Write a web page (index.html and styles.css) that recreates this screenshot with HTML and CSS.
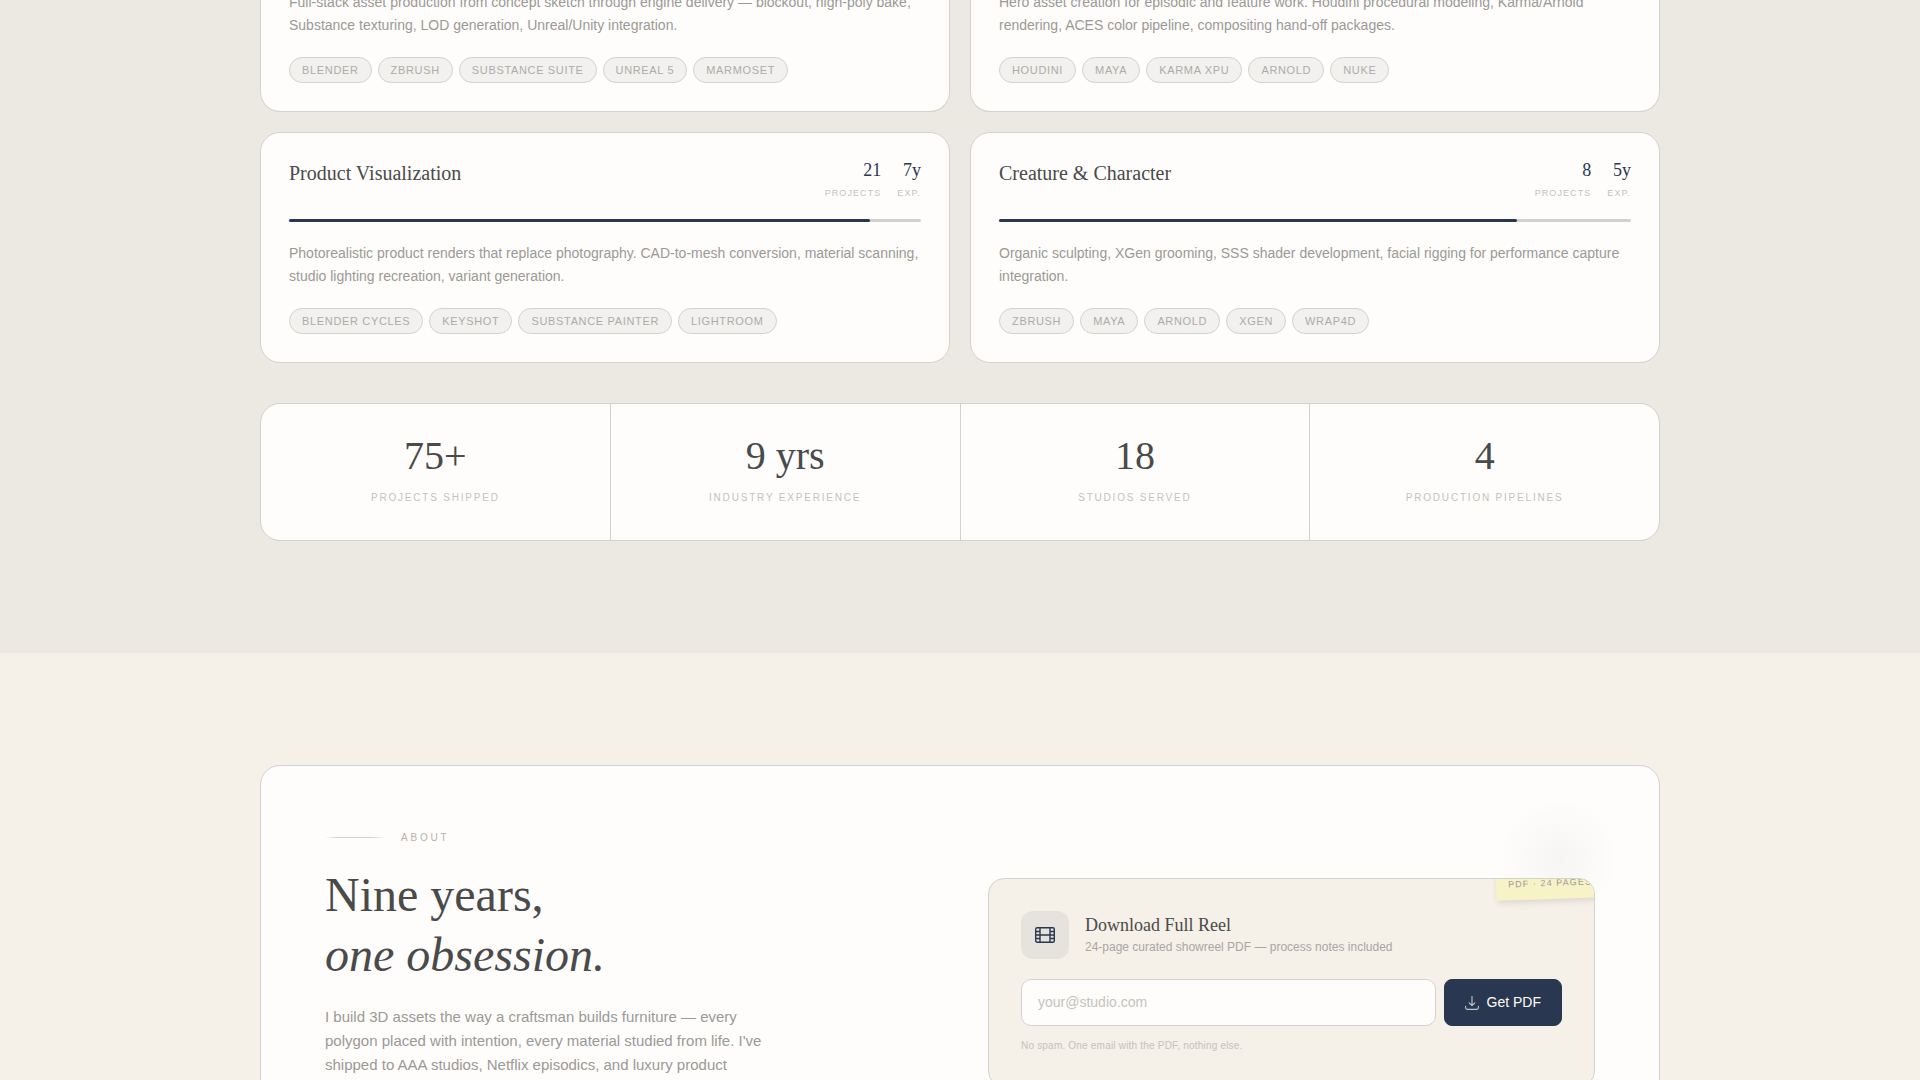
FILE: index.html
```html
<!DOCTYPE html>
<html lang="en">
<head>
    <meta charset="UTF-8">
    <meta name="viewport" content="width=device-width, initial-scale=1.0">
    <title>3D Artist Portfolio</title>
    <link rel="stylesheet" href="styles.css">
</head>
<body>
    <!-- Skills -->
    <section class="skills">
        <div class="container">
            <div class="skills-grid">
                <article class="skill-card skill-card-cut">
                    <p class="skill-desc">Full-stack asset production from concept sketch through engine delivery — blockout, high-poly bake, Substance texturing, LOD generation, Unreal/Unity integration.</p>
                    <ul class="tags">
                        <li>Blender</li>
                        <li>ZBrush</li>
                        <li>Substance Suite</li>
                        <li>Unreal 5</li>
                        <li>Marmoset</li>
                    </ul>
                </article>

                <article class="skill-card skill-card-cut">
                    <p class="skill-desc">Hero asset creation for episodic and feature work. Houdini procedural modeling, Karma/Arnold rendering, ACES color pipeline, compositing hand-off packages.</p>
                    <ul class="tags">
                        <li>Houdini</li>
                        <li>Maya</li>
                        <li>Karma XPU</li>
                        <li>Arnold</li>
                        <li>Nuke</li>
                    </ul>
                </article>

                <article class="skill-card">
                    <div class="skill-header">
                        <h3>Product Visualization</h3>
                        <div class="skill-meta">
                            <div><strong>21</strong><span>Projects</span></div>
                            <div><strong>7y</strong><span>Exp.</span></div>
                        </div>
                    </div>
                    <div class="skill-bar"><div class="skill-fill" style="width: 92%"></div></div>
                    <p class="skill-desc">Photorealistic product renders that replace photography. CAD-to-mesh conversion, material scanning, studio lighting recreation, variant generation.</p>
                    <ul class="tags">
                        <li>Blender Cycles</li>
                        <li>KeyShot</li>
                        <li>Substance Painter</li>
                        <li>Lightroom</li>
                    </ul>
                </article>

                <article class="skill-card">
                    <div class="skill-header">
                        <h3>Creature &amp; Character</h3>
                        <div class="skill-meta">
                            <div><strong>8</strong><span>Projects</span></div>
                            <div><strong>5y</strong><span>Exp.</span></div>
                        </div>
                    </div>
                    <div class="skill-bar"><div class="skill-fill" style="width: 82%"></div></div>
                    <p class="skill-desc">Organic sculpting, XGen grooming, SSS shader development, facial rigging for performance capture integration.</p>
                    <ul class="tags">
                        <li>ZBrush</li>
                        <li>Maya</li>
                        <li>Arnold</li>
                        <li>XGen</li>
                        <li>Wrap4D</li>
                    </ul>
                </article>
            </div>

            <div class="stats">
                <div class="stat"><strong>75+</strong><span>Projects Shipped</span></div>
                <div class="stat"><strong>9 yrs</strong><span>Industry Experience</span></div>
                <div class="stat"><strong>18</strong><span>Studios Served</span></div>
                <div class="stat"><strong>4</strong><span>Production Pipelines</span></div>
            </div>
        </div>
    </section>

    <!-- About -->
    <section class="about">
        <div class="container">
            <div class="about-card">
                <div class="about-text">
                    <div class="eyebrow">
                        <span class="eyebrow-line"></span>
                        <span>About</span>
                    </div>
                    <h2>Nine years,<br><em>one obsession.</em></h2>
                    <p>I build 3D assets the way a craftsman builds furniture — every polygon placed with intention, every material studied from life. I've shipped to AAA studios, Netflix episodics, and luxury product</p>
                </div>

                <div class="about-side">
                    <div class="glow"></div>
                    <div class="reel">
                        <div class="sticker">PDF · 24 pages</div>
                        <div class="reel-header">
                            <div class="reel-icon">
                                <svg width="20" height="20" viewBox="0 0 20 20" fill="none" stroke="#2a3750" stroke-width="1.4">
                                    <rect x="0.7" y="2.7" width="18.6" height="14.6" rx="1.5"/>
                                    <path d="M5 3v14M15 3v14M5 10h10M1 6.5h4M1 10h4M1 13.5h4M15 6.5h4M15 10h4M15 13.5h4"/>
                                </svg>
                            </div>
                            <div>
                                <h4>Download Full Reel</h4>
                                <p>24-page curated showreel PDF — process notes included</p>
                            </div>
                        </div>
                        <form class="reel-form">
                            <input type="email" placeholder="your@studio.com" aria-label="Email address">
                            <button type="button">
                                <svg width="14" height="14" viewBox="0 0 14 14" fill="none" stroke="#c3c7cd" stroke-width="1.1" stroke-linecap="round" stroke-linejoin="round">
                                    <path d="M7 0.5v9M4.2 6.9l2.8 2.7 2.8-2.7M0.6 10.2v1.6q0 1.6 1.6 1.6h9.6q1.6 0 1.6-1.6v-1.6"/>
                                </svg>
                                Get PDF
                            </button>
                        </form>
                        <p class="reel-note">No spam. One email with the PDF, nothing else.</p>
                    </div>
                </div>
            </div>
        </div>
    </section>
</body>
</html>
```
FILE: styles.css
```css
* {
    box-sizing: border-box;
    margin: 0;
    padding: 0;
}

html {
    height: 100%;
    overflow: hidden;
}

body {
    height: 100%;
    overflow: hidden;
    font-family: "Liberation Sans", Arial, sans-serif;
    background-color: #f5f0e8;
    color: #4a4a4a;
}

h2, h3, h4, strong {
    font-family: "Liberation Serif", "Times New Roman", serif;
    font-weight: normal;
}

.container {
    max-width: 1400px;
    margin: 0 auto;
}

/* Skills */
.skills {
    background-color: #ece9e2;
    padding-bottom: 112px;
}

.skills-grid {
    display: grid;
    grid-template-columns: 1fr 1fr;
    gap: 20px;
}

.skill-card {
    background-color: #fefdfb;
    border: 1px solid #d4d2ce;
    border-radius: 20px;
    padding: 28px;
}

/* top row is scrolled partly out of view */
.skill-card-cut {
    margin-top: -9px;
    padding-top: 0;
    border-top: none;
    border-top-left-radius: 0;
    border-top-right-radius: 0;
}

.skill-header {
    display: flex;
    justify-content: space-between;
    align-items: flex-start;
    margin-bottom: 20px;
}

.skill-header h3 {
    font-size: 20px;
    line-height: 24px;
}

.skill-meta {
    display: flex;
    gap: 16px;
    text-align: right;
}

.skill-meta strong {
    display: block;
    font-size: 18px;
    line-height: 18px;
    color: #2a3750;
}

.skill-meta span {
    display: block;
    margin-top: 8px;
    font-size: 9px;
    line-height: 12px;
    letter-spacing: 0.12em;
    text-transform: uppercase;
    color: #c4c2be;
}

.skill-bar {
    height: 3px;
    border-radius: 2px;
    background-color: #d4d2ce;
    margin-bottom: 20px;
}

.skill-fill {
    height: 100%;
    border-radius: 2px;
    background-color: #2a3750;
}

.skill-desc {
    font-size: 14px;
    line-height: 23px;
    color: #9b9996;
    margin-bottom: 20px;
}

.tags {
    display: flex;
    flex-wrap: wrap;
    gap: 6px;
    list-style: none;
}

.tags li {
    border: 1px solid #d4d2ce;
    border-radius: 20px;
    background-color: #f2f1ef;
    padding: 5px 12px;
    font-size: 11px;
    line-height: 14px;
    letter-spacing: 0.06em;
    text-transform: uppercase;
    color: #adaba8;
}

/* Stats */
.stats {
    display: grid;
    grid-template-columns: repeat(4, 1fr);
    gap: 1px;
    margin-top: 40px;
    border: 1px solid #d4d2ce;
    border-radius: 20px;
    background-color: #d4d2ce;
    overflow: hidden;
}

.stat {
    background-color: #fefdfb;
    padding: 32px 24px 34px;
    text-align: center;
}

.stat strong {
    display: block;
    font-size: 40px;
    line-height: 40px;
}

.stat span {
    display: block;
    margin-top: 14px;
    font-size: 10px;
    line-height: 16px;
    letter-spacing: 0.18em;
    text-transform: uppercase;
    color: #c4c2be;
}

/* About */
.about {
    padding: 112px 0;
}

.about-card {
    display: grid;
    grid-template-columns: 1fr 1fr;
    gap: 56px;
    background-color: #fefdfb;
    border: 1px solid #d4d2ce;
    border-radius: 20px;
    padding: 64px;
}

.eyebrow {
    display: flex;
    align-items: center;
    gap: 16px;
    margin-bottom: 20px;
    font-size: 10px;
    line-height: 15px;
    letter-spacing: 0.28em;
    text-transform: uppercase;
    color: #b4b2ae;
}

.eyebrow-line {
    width: 60px;
    height: 1px;
    background: linear-gradient(90deg, transparent, #d4d2ce 20%, #d4d2ce 80%, transparent);
}

.about-text h2 {
    font-size: 48px;
    line-height: 60px;
    margin-bottom: 20px;
}

.about-text p {
    max-width: 460px;
    font-size: 15px;
    line-height: 24px;
    color: #9b9996;
}

.about-side {
    position: relative;
    padding-top: 48px;
}

.glow {
    position: absolute;
    top: -32px;
    right: -24px;
    width: 120px;
    height: 120px;
    border-radius: 50%;
    background: radial-gradient(circle, rgba(42, 55, 80, 0.04), transparent 70%);
}

.reel {
    position: relative;
    overflow: hidden;
    background-color: #f5f0e8;
    border: 1px solid #d4d2ce;
    border-radius: 16px;
    padding: 32px;
}

.sticker {
    position: absolute;
    top: -12px;
    right: -10px;
    transform: rotate(-2deg);
    background-color: #f8f3c6;
    box-shadow: 1px 3px 6px rgba(0, 0, 0, 0.1);
    padding: 9px 12px;
    font-size: 9px;
    line-height: 14px;
    letter-spacing: 0.12em;
    text-transform: uppercase;
    color: #9b9996;
}

.reel-header {
    display: flex;
    align-items: center;
    gap: 16px;
    margin-bottom: 20px;
}

.reel-icon {
    display: flex;
    align-items: center;
    justify-content: center;
    width: 48px;
    height: 48px;
    border-radius: 12px;
    background-color: #e5e3db;
}

.reel-header h4 {
    font-size: 18px;
    line-height: 24px;
}

.reel-header p {
    font-size: 12px;
    line-height: 20px;
    color: #a9a7a3;
}

.reel-form {
    display: flex;
    gap: 8px;
}

.reel-form input {
    flex: 1;
    min-width: 0;
    border: 1px solid #d4d2ce;
    border-radius: 10px;
    background-color: #fefdfb;
    padding: 14px 16px;
    font-family: inherit;
    font-size: 14px;
    line-height: 17px;
}

.reel-form input::placeholder {
    color: #c4c2be;
}

.reel-form button {
    display: flex;
    align-items: center;
    gap: 8px;
    border: 1px solid #2a3750;
    border-radius: 8px;
    background-color: #2a3750;
    color: #fefdfb;
    padding: 14px 20px;
    font-family: inherit;
    font-size: 14px;
    line-height: 17px;
    cursor: pointer;
}

.reel-note {
    margin-top: 12px;
    font-size: 10px;
    line-height: 16px;
    letter-spacing: 0.02em;
    color: #c4c2be;
}
```
